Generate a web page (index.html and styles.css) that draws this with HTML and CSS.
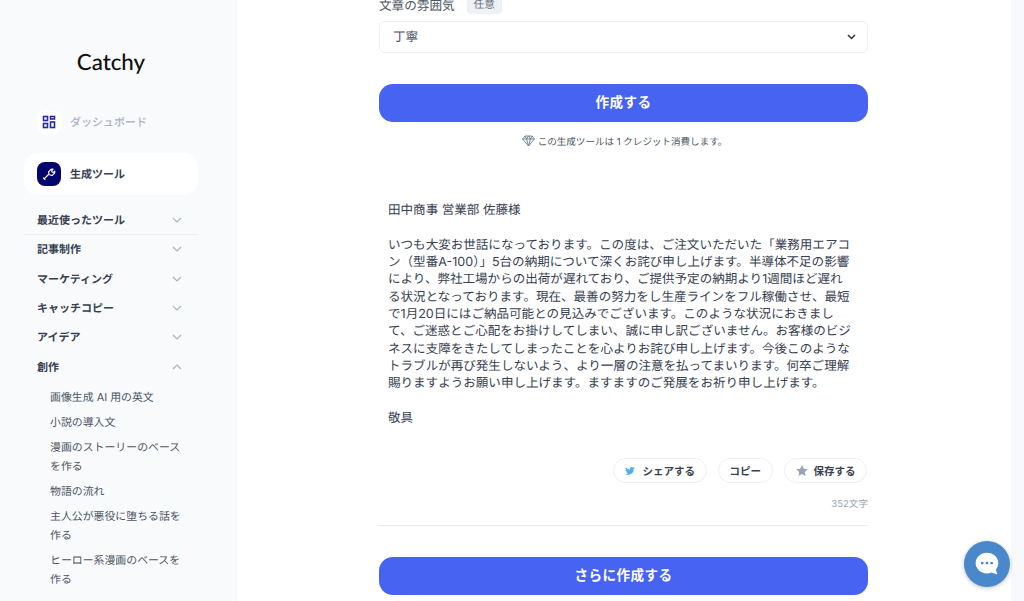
FILE: index.html
```html
<!DOCTYPE html>
<html lang="ja">
<head>
<meta charset="utf-8">
<title>Catchy</title>
<link rel="stylesheet" href="styles.css">
</head>
<body>
<div class="app">
  <aside class="sidebar">
    <div class="logo">Catchy</div>
    <div class="dash">
      <span class="dash-icon">
        <svg width="14" height="14" viewBox="0 0 14 14" fill="none" stroke="#2a2aa0" stroke-width="1.6"><rect x="1.5" y="1.5" width="4" height="4"/><rect x="8.5" y="1.5" width="4" height="2.5"/><rect x="8.5" y="7" width="4" height="5.5"/><rect x="1.5" y="8.5" width="4" height="4"/></svg>
      </span>
      <span class="dash-label">ダッシュボード</span>
    </div>
    <div class="active-item">
      <span class="active-icon">
        <svg width="14" height="14" viewBox="0 0 14 14" fill="none" stroke="#fff" stroke-width="1.2" stroke-linecap="round" stroke-linejoin="round"><path d="M2.2 11.8 7 7M7 7 6.6 4.8 9 2.4 11 2.2 9.6 4l.5 1 1.1.4 1.6-1.3-.2 2-2.4 2.3L8 8"/><path d="M1.6 11 3 12.4"/></svg>
      </span>
      <span>生成ツール</span>
    </div>
    <nav class="menu">
      <div class="menu-row first"><span>最近使ったツール</span><svg class="chev" width="10" height="6" viewBox="0 0 10 6"><path d="M1 1l4 4 4-4"/></svg></div>
      <div class="menu-row"><span>記事制作</span><svg class="chev" width="10" height="6" viewBox="0 0 10 6"><path d="M1 1l4 4 4-4"/></svg></div>
      <div class="menu-row"><span>マーケティング</span><svg class="chev" width="10" height="6" viewBox="0 0 10 6"><path d="M1 1l4 4 4-4"/></svg></div>
      <div class="menu-row"><span>キャッチコピー</span><svg class="chev" width="10" height="6" viewBox="0 0 10 6"><path d="M1 1l4 4 4-4"/></svg></div>
      <div class="menu-row"><span>アイデア</span><svg class="chev" width="10" height="6" viewBox="0 0 10 6"><path d="M1 1l4 4 4-4"/></svg></div>
      <div class="menu-row"><span>創作</span><svg class="chev" width="10" height="6" viewBox="0 0 10 6"><path d="M1 5l4-4 4 4"/></svg></div>
      <ul class="submenu">
        <li>画像生成 AI 用の英文</li>
        <li>小説の導入文</li>
        <li>漫画のストーリーのベースを作る</li>
        <li>物語の流れ</li>
        <li>主人公が悪役に堕ちる話を作る</li>
        <li>ヒーロー系漫画のベースを作る</li>
      </ul>
    </nav>
  </aside>
  <main class="main">
    <div class="column">
      <div class="field-label"><span>文章の雰囲気</span><span class="tag">任意</span></div>
      <div class="select"><span class="select-value">丁寧</span>
        <svg class="select-chev" width="9" height="6" viewBox="0 0 9 6"><path d="M1 1l3.5 3.5L8 1"/></svg>
      </div>
      <button class="primary create">作成する</button>
      <p class="credit">
        <svg width="13" height="12" viewBox="0 0 13 12" fill="none" stroke="#6b7a90" stroke-width=".9" stroke-linejoin="round"><path d="M3 1h7l2.400 3L6.500 11 .6 4zM.6 4h11.800M4.500 4l2 7 2-7M3 1l1.500 3L6.500 1l2 3L10 1"/></svg>
        <span>この生成ツールは 1 クレジット消費します。</span>
      </p>
      <article class="result">
        <p>田中商事 営業部 佐藤様</p>
        <p>いつも大変お世話になっております。この度は、ご注文いただいた「業務用エアコン（型番A-100）」5台の納期について深くお詫び申し上げます。半導体不足の影響により、弊社工場からの出荷が遅れており、ご提供予定の納期より1週間ほど遅れる状況となっております。現在、最善の努力をし生産ラインをフル稼働させ、最短で1月20日にはご納品可能との見込みでございます。このような状況におきまして、ご迷惑とご心配をお掛けしてしまい、誠に申し訳ございません。お客様のビジネスに支障をきたしてしまったことを心よりお詫び申し上げます。今後このようなトラブルが再び発生しないよう、より一層の注意を払ってまいります。何卒ご理解賜りますようお願い申し上げます。ますますのご発展をお祈り申し上げます。</p>
        <p>敬具</p>
      </article>
      <div class="actions">
        <button class="pill pill-share">
          <svg width="10" height="8" viewBox="0 0 24 20"><path fill="#55acee" d="M24 2.400c-.9.400-1.800.7-2.800.8 1-.6 1.800-1.600 2.200-2.700-1 .6-2 1-3.100 1.200A4.900 4.900 0 0 0 11.900 6.200C7.800 6 4.200 4 1.700.9a4.900 4.900 0 0 0 1.500 6.600c-.8 0-1.600-.2-2.200-.6 0 2.400 1.700 4.400 3.900 4.900-.7.200-1.500.2-2.200.1.600 2 2.400 3.400 4.600 3.400A9.900 9.900 0 0 1 0 17.300 14 14 0 0 0 21.500 4.900c1-.7 1.800-1.500 2.500-2.500z"/></svg>
          シェアする</button>
        <button class="pill">コピー</button>
        <button class="pill">
          <svg width="12" height="11" viewBox="0 0 24 23"><path fill="#98a3b8" d="M12 0l3.700 7.600 8.300 1.200-6 5.900 1.400 8.300L12 19l-7.400 4L6 14.700 0 8.800l8.300-1.200z"/></svg>
          保存する</button>
      </div>
      <div class="count">352文字</div>
      <button class="primary again">さらに作成する</button>
    </div>
  </main>
  <div class="strip"></div>
</div>
<button class="chat" aria-label="chat">
  <svg width="34" height="34" viewBox="0 0 36 36"><path fill="#fff" d="M18 6c-6.600 0-12 4.800-12 11s5.400 11 12 11c1.700 0 3.300-.3 4.800-.9L29 29l-1.700-5.100c1.700-1.800 2.700-4.200 2.700-6.900C30 10.800 24.600 6 18 6z"/><circle cx="13" cy="17" r="1.500" fill="#4a88cc"/><circle cx="18" cy="17" r="1.500" fill="#4a88cc"/><circle cx="23" cy="17" r="1.500" fill="#4a88cc"/></svg>
</button>
</body>
</html>
```
FILE: styles.css
```css
* { box-sizing: border-box; }
html, body { margin: 0; height: 601px; overflow: hidden; }
body {
  font-family: Inter, "Noto Sans CJK JP", sans-serif;
  color: #374151;
  background: #fff;
  text-rendering: geometricPrecision;
}
.app { display: flex; height: 601px; overflow: hidden; }
.sidebar {
  width: 237px;
  flex: none;
  background: #f9fafc;
  padding: 46px 40px 0 24px;
  overflow: hidden;
}
.logo {
  font-family: Lato, sans-serif;
  font-size: 22.300px;
  font-weight: 500;
  line-height: 32px;
  color: #111;
  text-align: center;
  padding-left: 1px;
}
.dash {
  display: flex;
  align-items: center;
  gap: 9px;
  margin: 32px 0 0 13px;
  font-size: 11px;
  font-weight: 500;
  color: #aab3c5;
}
.dash-icon {
  width: 24px; height: 24px; border-radius: 8px; background: #fff;
  display: flex; align-items: center; justify-content: center;
}
.active-item {
  display: flex;
  align-items: center;
  gap: 9px;
  width: 174px;
  height: 42px;
  margin-top: 19px;
  padding-left: 13px;
  background: #fff;
  border-radius: 14px;
  font-size: 11px;
  font-weight: 700;
  color: #374151;
}
.active-icon {
  width: 24px; height: 24px; border-radius: 8px; background: #05056e;
  display: flex; align-items: center; justify-content: center;
}
.menu { width: 174px; margin-top: 10.500px; }
.menu-row {
  display: flex;
  align-items: center;
  justify-content: space-between;
  height: 29.300px;
  padding: 0 16px 0 13px;
  font-size: 11px;
  font-weight: 700;
  color: #374151;
}
.menu-row.first { border-bottom: 1px solid #eceef3; }
.chev { fill: none; stroke: #aab3c5; stroke-width: 1.200; }
.submenu {
  list-style: none;
  margin: 0;
  padding: 6.500px 8px 0 26px;
  font-size: 10.900px;
  line-height: 19.200px;
  color: #4b5563;
}
.submenu li { margin-bottom: 5.800px; }
.main { flex: 1; display: flex; justify-content: center; background: #fff; overflow: hidden; padding-right: 1px; }
.strip { width: 13px; flex: none; background: #f8f9fc; }
.column { width: 489px; margin-top: -6px; flex: none; }
.field-label {
  display: flex;
  align-items: center;
  gap: 12px;
  height: 20px;
  font-size: 12.600px;
  color: #4b5563;
}
.tag {
  align-self: flex-end;
  background: #eef1f5;
  border-radius: 4px;
  padding: 0 7px;
  font-size: 10.700px;
  line-height: 18px;
  color: #6b7280;
}
.select {
  display: flex;
  align-items: center;
  justify-content: space-between;
  height: 32px;
  margin-top: 7px;
  padding: 0 11px 0 13px;
  border: 1px solid #eef0f5;
  border-radius: 6px;
  font-size: 12.600px;
  color: #4b5563;
}
.select-value { position: relative; top: -2px; }
.select-chev { fill: none; stroke: #333; stroke-width: 1.500; }
.primary {
  display: block;
  width: 100%;
  height: 38px;
  border: 0;
  border-radius: 14px;
  padding: 0 0 5px;
  background: #4763f1;
  color: #fff;
  font-family: inherit;
  font-size: 13.600px;
  font-weight: 700;
  letter-spacing: .4px;
}
.create { margin-top: 31px; }
.credit {
  display: flex;
  align-items: center;
  justify-content: center;
  gap: 3px;
  margin: 11px 0 0;
  height: 15px;
  padding-left: 2px;
  font-size: 9.550px;
  color: #4b5563;
}
.result {
  margin-top: 54px;
  padding: 0 14px 0 9px;
  font-size: 12.550px;
  line-height: 17.350px;
  color: #374151;
}
.result p { margin: 0 0 17.350px; }
.actions { display: flex; justify-content: flex-end; gap: 11.500px; margin-top: 31px; padding-right: 1px; }
.pill {
  display: flex;
  align-items: center;
  gap: 6px;
  height: 25px;
  padding: 0 10.500px;
  border: 1px solid #eceff5;
  border-radius: 13px;
  background: #fff;
  font-family: inherit;
  font-size: 10.500px;
  font-weight: 700;
  color: #374151;
}
.pill-share { gap: 8px; }
.count {
  margin-top: 13px;
  padding-bottom: 15px;
  border-bottom: 1px solid #e8eaee;
  text-align: right;
  font-size: 9.600px;
  color: #98a3b8;
}
.again { margin-top: 31px; }
.chat {
  position: fixed;
  left: 964px;
  top: 541px;
  width: 46px;
  height: 46px;
  border: 0;
  padding: 0;
  border-radius: 50%;
  background: #4a88cc;
  box-shadow: 0 1px 4px rgba(0,0,0,.25);
  display: flex;
  align-items: center;
  justify-content: center;
}
```
